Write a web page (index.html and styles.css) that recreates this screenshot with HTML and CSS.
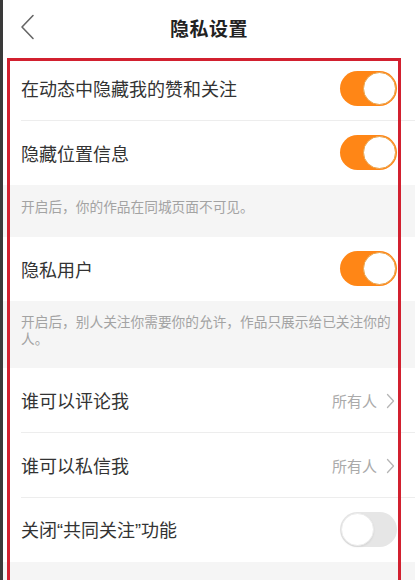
FILE: index.html
```html
<!DOCTYPE html>
<html lang="zh">
<head>
<meta charset="utf-8">
<link rel="stylesheet" href="styles.css">
</head>
<body>
<div class="screen">
  <header class="nav">
    <svg class="back" width="16" height="26" viewBox="0 0 16 26"><path d="M13 1.5 L2 13 L13 24.5" fill="none" stroke="#666" stroke-width="1.6" stroke-linecap="round" stroke-linejoin="round"/></svg>
    <h1 class="title">隐私设置</h1>
  </header>
  <main class="list">
    <div class="row divided">
      <span class="label">在动态中隐藏我的赞和关注</span>
      <span class="toggle on"><span class="knob"></span></span>
    </div>
    <div class="row">
      <span class="label">隐藏位置信息</span>
      <span class="toggle on"><span class="knob"></span></span>
    </div>
    <div class="note note-short">开启后，你的作品在同城页面不可见。</div>
    <div class="row">
      <span class="label">隐私用户</span>
      <span class="toggle on"><span class="knob"></span></span>
    </div>
    <div class="note note-long">开启后，别人关注你需要你的允许，作品只展示给已关注你的人。</div>
    <div class="row divided">
      <span class="label">谁可以评论我</span>
      <span class="value">所有人<svg class="chev" width="9" height="16" viewBox="0 0 9 16"><path d="M1.5 1.5 L7.5 8 L1.5 14.5" fill="none" stroke="#b5b5b5" stroke-width="1.3" stroke-linecap="round" stroke-linejoin="round"/></svg></span>
    </div>
    <div class="row divided">
      <span class="label">谁可以私信我</span>
      <span class="value">所有人<svg class="chev" width="9" height="16" viewBox="0 0 9 16"><path d="M1.5 1.5 L7.5 8 L1.5 14.5" fill="none" stroke="#b5b5b5" stroke-width="1.3" stroke-linecap="round" stroke-linejoin="round"/></svg></span>
    </div>
    <div class="row">
      <span class="label">关闭<span class="q">“</span>共同关注<span class="q">”</span>功能</span>
      <span class="toggle off"><span class="knob"></span></span>
    </div>
    <div class="tail"></div>
  </main>
  <div class="mark"></div>
</div>
</body>
</html>
```
FILE: styles.css
```css
html, body {
  margin: 0;
  padding: 0;
  background: #f5f5f5;
}
body {
  font-family: "Noto Sans CJK SC", "Noto Sans", sans-serif;
  color: #333;
}
.screen {
  position: relative;
  width: 415px;
  height: 580px;
  overflow: hidden;
  box-sizing: border-box;
  border-left: 3px solid #3a3a3a;
  background: #f5f5f5;
  display: flex;
  flex-direction: column;
}
.nav {
  height: 56px;
  flex: none;
  background: #fff;
  display: flex;
  align-items: center;
  justify-content: center;
  position: relative;
}
.back {
  position: absolute;
  left: 17px;
  top: 14px;
}
.title {
  margin: 0;
  font-size: 19px;
  font-weight: 700;
  color: #222;
  letter-spacing: 0.5px;
  margin-top: -2px;
}
.list {
  display: flex;
  flex-direction: column;
}
.row {
  height: 64px;
  box-sizing: border-box;
  background: #fff;
  display: flex;
  align-items: center;
  justify-content: space-between;
  padding: 0 18px 0 18px;
  position: relative;
}
.row.divided {
  height: 65px;
}
.row.divided::after {
  content: "";
  position: absolute;
  left: 18px;
  right: 0;
  bottom: 0;
  height: 1px;
  background: #ededed;
}
.label {
  font-size: 18px;
  color: #333;
  line-height: 24px;
  margin-top: -1px;
}
.q {
  font-family: "Liberation Sans", sans-serif;
}
.value {
  display: flex;
  align-items: center;
  gap: 9px;
  font-size: 15px;
  color: #aaa;
  padding-right: 2px;
}
.chev {
  display: block;
}
.toggle {
  width: 57px;
  height: 35px;
  border-radius: 18px;
  box-sizing: border-box;
  position: relative;
  flex: none;
  margin-top: -1px;
}
.toggle.on {
  background: #ff8616;
}
.toggle.off {
  background: #e6e6e6;
}
.knob {
  position: absolute;
  top: 1px;
  width: 33px;
  height: 33px;
  border-radius: 50%;
  background: #fff;
  box-sizing: border-box;
}
.toggle.on .knob {
  right: 1px;
  border: 1px solid #e9a54e;
}
.toggle.off .knob {
  left: 1px;
  border: 1px solid #ececec;
  box-shadow: 0 1px 2px rgba(0,0,0,0.08);
}
.note {
  background: #f5f5f5;
  font-size: 13.7px;
  line-height: 17px;
  color: #a3a3a3;
  padding: 13px 6px 0 18px;
  box-sizing: border-box;
}
.note-short {
  height: 52px;
}
.note-long {
  height: 67px;
  padding-top: 12px;
}
.tail {
  height: 30px;
  background: #f5f5f5;
}
.mark {
  position: absolute;
  left: 4px;
  top: 58px;
  width: 394px;
  height: 540px;
  box-sizing: border-box;
  border: 3px solid #d2202f;
  pointer-events: none;
}
```
